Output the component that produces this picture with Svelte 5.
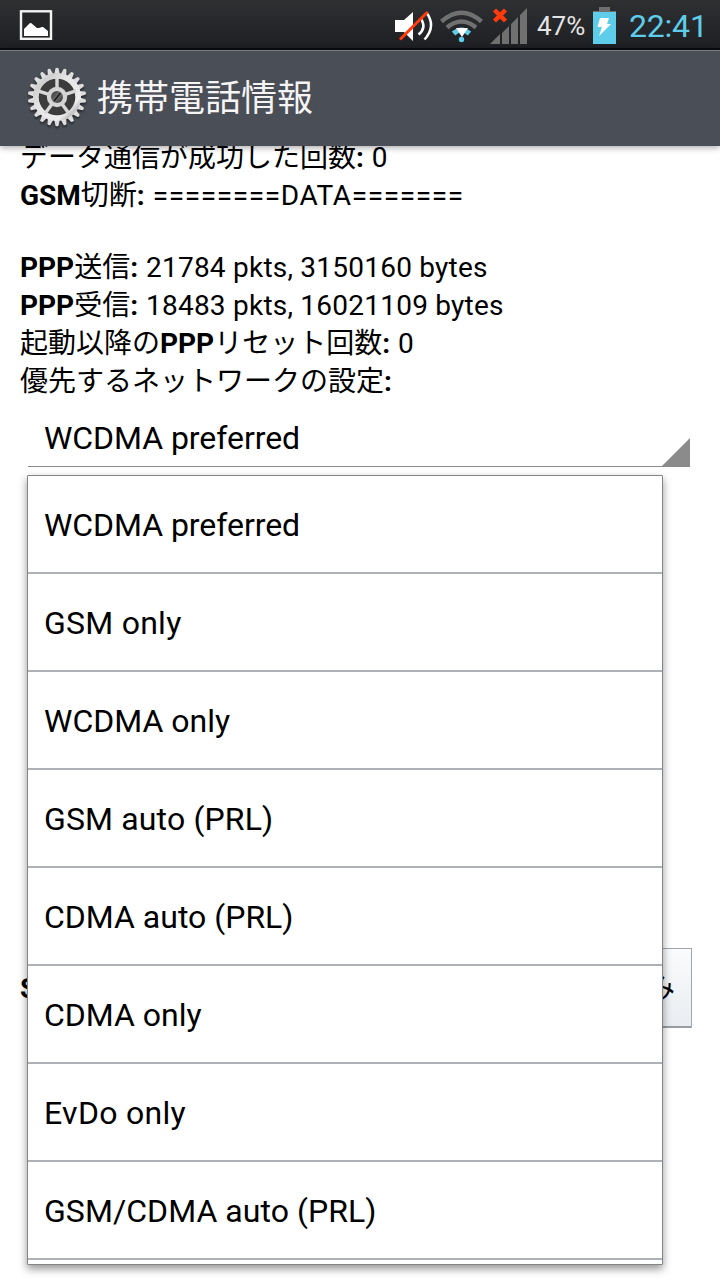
<script>
  const options = [
    { label: 'WCDMA preferred', tracking: -0.05 },
    { label: 'GSM only', tracking: 0.25 },
    { label: 'WCDMA only', tracking: 0 },
    { label: 'GSM auto (PRL)', tracking: 0.15 },
    { label: 'CDMA auto (PRL)', tracking: 0 },
    { label: 'CDMA only', tracking: 0 },
    { label: 'EvDo only', tracking: 0.3 },
    { label: 'GSM/CDMA auto (PRL)', tracking: 0.06 }
  ];
  const teeth = Array.from({ length: 22 }, (_, i) => (i * 360) / 22);
  const spokes = [0, 72, 144, 216, 288];
</script>

<div class="screen">
  <div class="status">
    <svg class="photo" width="34" height="32" viewBox="0 0 34 32">
      <rect x="2" y="2.300" width="30" height="27.500" fill="#242628" stroke="#f2f2f2" stroke-width="2.400" />
      <path d="M5 27v-7l2-2 4-4h1l6 5h2l3-1h1l5 4v5z" fill="#fff" />
    </svg>
    <svg class="icons" width="140" height="50" viewBox="390 0 140 50">
      <path d="M395 20h9l9-8v29l-9-9h-9z" fill="#fff" />
      <path d="M418.500 34.500q8-6 3-15M424.500 39.500q12-13 2-27" fill="none" stroke="#fff" stroke-width="2.500" />
      <path d="M400 39.500l27.500-27.500" stroke="#ff3a0c" stroke-width="3" />
      <path d="M441.500 21.500q20-17.500 40 0" fill="none" stroke="#707070" stroke-width="4.500" />
      <path d="M447 27.500q14.500-12 29 0" fill="none" stroke="#707070" stroke-width="4.500" />
      <path d="M453.500 33.500q8-7 16 0" fill="none" stroke="#5ecde9" stroke-width="5" />
      <path d="M456 28h12l-6 9z" fill="#fff" />
      <circle cx="461.500" cy="39.500" r="2.700" fill="#5ecde9" />
      <path d="M490 44l10-10v10zM502 33l7-7v18h-7zM511 24l7-7v27h-7zM520 15l7-7v36h-7z" fill="#707070" />
      <path d="M494.500 10l11 11M505.500 10l-11 11" stroke="#ff3a0c" stroke-width="4.500" />
    </svg>
    <span class="percent">47%</span>
    <svg class="battery" width="23" height="37" viewBox="0 0 23 37">
      <path d="M6 0h11v4h6v2H0V4h6z" fill="#707070" />
      <rect y="5" width="23" height="32" fill="#5ecde9" />
      <path d="M7 11h9l-2 6h4L6 29l3-9H4.500z" fill="#fff" />
    </svg>
    <span class="clock">22:41</span>
  </div>

  <header>
    <svg class="gear" width="64" height="64" viewBox="-32 -32 64 64">
      <defs>
        <linearGradient id="metal" x1="0" y1="0" x2="1" y2="1">
          <stop offset="0" stop-color="#eee" />
          <stop offset=".2" stop-color="#d0d0d0" />
          <stop offset=".4" stop-color="#e6e6e6" />
          <stop offset=".75" stop-color="#ececec" />
          <stop offset=".82" stop-color="#c4c4c4" />
          <stop offset="1" stop-color="#e8e8e8" />
        </linearGradient>
        <linearGradient id="screw" x1="0" y1="0" x2="1" y2="1">
          <stop offset="0" stop-color="#2c2c2c" />
          <stop offset=".5" stop-color="#707070" />
          <stop offset="1" stop-color="#2c2c2c" />
        </linearGradient>
      </defs>
      {#each teeth as a}
        <path d="M-3-22L-1.500-28.700Q0-30 1.500-28.700L3-22z" fill="#dedede" transform="rotate({a})" />
      {/each}
      <circle r="24" fill="url(#metal)" />
      <circle r="18.300" fill="#3c3c3c" />
      {#each spokes as a}
        <path d="M0-7V-20" stroke="#d8d8d8" stroke-width="3.400" transform="rotate({a})" />
      {/each}
      <circle r="10.200" fill="#d4d4d4" />
      <circle r="6" fill="url(#screw)" />
      <path d="M-3 4L3.500-4" stroke="#181818" stroke-width="1.300" />
    </svg>
    <h1>携帯電話情報</h1>
  </header>

  <main>
    <p><b>データ通信が成功した回数<i>:</i></b> <span class="count">0</span></p>
    <p><b><i>GSM</i>切断<i>:</i></b> <span class="rule">========DATA=======</span></p>
    <p class="blank"></p>
    <p><b><i>PPP</i>送信<i>:</i></b> <span class="count">21784 pkts, 3150160 bytes</span></p>
    <p><b><i>PPP</i>受信<i>:</i></b> <span class="count">18483 pkts, 16021109 bytes</span></p>
    <p><b>起動以降の<i>PPP</i>リセット回数<i>:</i></b> <span class="count">0</span></p>
    <p><b>優先するネットワークの設定<i>:</i></b></p>
    <div class="spinner">
      WCDMA preferred
      <svg width="28" height="28" viewBox="0 0 28 28"><path d="M28 0v28H0z" fill="#8b8b8b" /></svg>
    </div>
    <div class="sms">
      <b><i>S</i></b>
      <button>み</button>
    </div>
  </main>

  <ul class="popup">
    {#each options as option}
      <li style="letter-spacing: {option.tracking}px">{option.label}</li>
    {/each}
  </ul>
</div>

<style>
  :global(body) { margin: 0; background: #fff; }
  .screen {
    position: relative;
    display: flex;
    flex-direction: column;
    width: 720px;
    height: 1280px;
    overflow: hidden;
    background: #fff;
    color: #000;
    font-family: Roboto, "Noto Sans CJK JP", sans-serif;
  }
  .status {
    box-sizing: border-box;
    flex: none;
    display: flex;
    align-items: flex-start;
    height: 50px;
    padding-left: 19px;
    border-bottom: 2px solid #0b0c0d;
    background: linear-gradient(#2e3032, #1e1f23);
    white-space: nowrap;
  }
  .photo { margin-top: 9px; }
  .icons { margin-left: 337px; }
  .percent { width: 55px; margin-left: 7px; box-sizing: border-box; font-size: 26px; line-height: 53px; color: #e4e4e4; }
  .battery { margin: 7px 0 0 1px; }
  .clock { margin-left: 13px; font-size: 32px; line-height: 53px; color: #5ecde9; letter-spacing: -.2px; }
  header {
    box-sizing: border-box;
    flex: none;
    display: flex;
    align-items: center;
    height: 96px;
    padding-left: 25px;
    border-top: 1px solid #7b7f84;
    background: #4a4e56;
    box-shadow: 0 1px 7px rgba(0, 0, 0, .4);
    z-index: 1;
  }
  .gear { margin-top: -3px; filter: drop-shadow(0 2px 1px rgba(0, 0, 0, .5)); }
  h1 { margin: 0 0 0 8px; font-size: 36px; line-height: 50px; font-weight: 400; color: #f4f4f4; }
  main { flex: 1; min-height: 0; overflow: hidden; padding-left: 20px; }
  p { margin: 0; height: 38px; line-height: 38px; font-size: 28px; white-space: nowrap; }
  p:first-child { margin-top: -7px; }
  .blank { height: 34px; }
  b { font-weight: 400; }
  i { font-style: normal; font-weight: 700; }
  .rule { margin-left: 1px; letter-spacing: .63px; }
  .count { margin-left: 1px; letter-spacing: .23px; }
  .spinner {
    box-sizing: border-box;
    display: flex;
    justify-content: space-between;
    align-items: flex-end;
    width: 662px;
    height: 66px;
    margin-left: 8px;
    padding-left: 16px;
    border-bottom: 1px solid #8b8b8b;
    font-size: 32px;
    line-height: 55px;
    letter-spacing: -.05px;
  }
  .spinner svg { display: block; }
  .sms {
    display: flex;
    justify-content: space-between;
    align-items: center;
    width: 672px;
    height: 80px;
    margin-top: 481px;
    font-size: 28px;
  }
  button {
    width: 120px;
    height: 80px;
    padding: 0 16px 3px 0;
    border: 1px solid #a2a6ab;
    border-bottom: 2px solid #999da1;
    border-radius: 1px;
    background: linear-gradient(#fafbfc, #e9edf1);
    color: #000;
    font: 28px "Noto Sans CJK JP", sans-serif;
    text-align: right;
  }
  .popup {
    position: absolute;
    left: 27px;
    top: 475px;
    z-index: 2;
    box-sizing: border-box;
    width: 636px;
    height: 790px;
    margin: 0;
    padding: 0;
    border: 1px solid #858585;
    border-radius: 1px;
    background: #fff;
    box-shadow: 0 4px 8px rgba(0, 0, 0, .42);
    list-style: none;
  }
  li {
    box-sizing: border-box;
    height: 98px;
    padding-left: 16px;
    border-bottom: 2px solid #adb1b5;
    font-size: 32px;
    line-height: 98px;
  }
</style>
